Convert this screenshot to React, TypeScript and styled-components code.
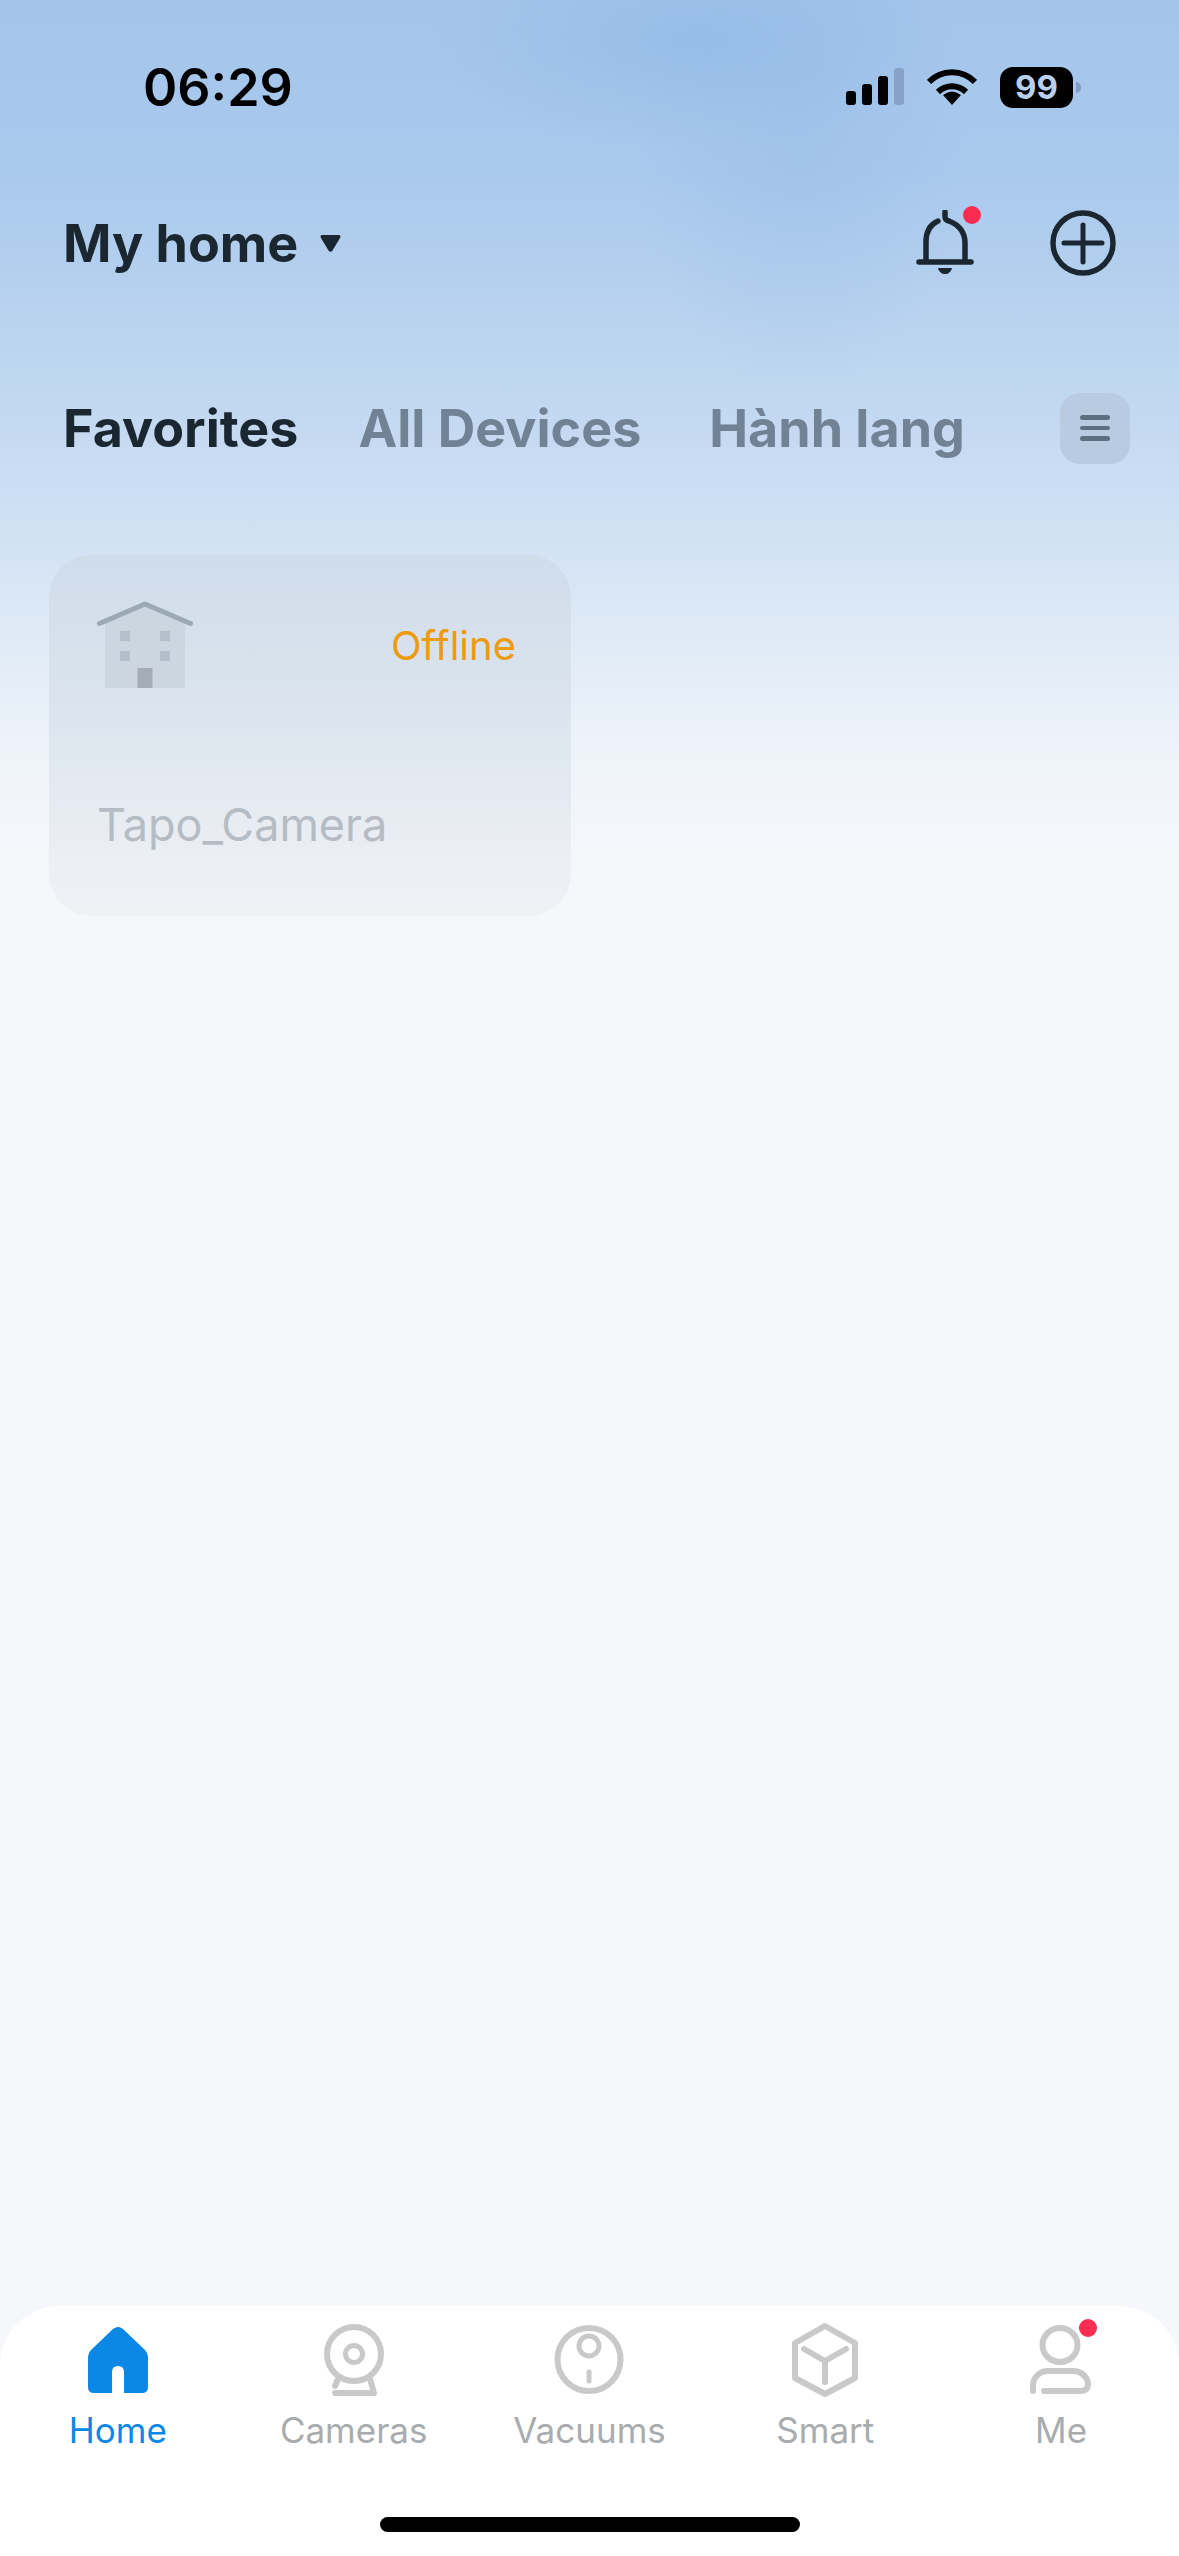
import React from "react";
import styled, { createGlobalStyle } from "styled-components";

const Global = createGlobalStyle`
  html, body { margin: 0; padding: 0; background: #f5f7fb; }
  body { font-family: Inter, "Noto Sans", sans-serif; overflow: hidden; }
`;

const Page = styled.div`
  position: relative;
  width: 1179px;
  height: 2556px;
  display: flex;
  flex-direction: column;
  overflow: hidden;
  background:
    radial-gradient(ellipse 260px 110px at 690px 40px, rgba(146, 186, 229, 0.75), transparent),
    radial-gradient(ellipse 170px 260px at 800px 130px, rgba(150, 188, 230, 0.45), transparent),
    linear-gradient(180deg, #a4c5eb 0, #a9c9ed 170px, #bad3ef 330px, #cbdef3 490px, #dde9f6 620px, #eff4fa 760px, #f5f7fb 860px, #f5f7fb 100%);
`;

const StatusBar = styled.div`
  height: 174px;
  flex: none;
  display: flex;
  align-items: center;
  justify-content: space-between;
  padding: 0 98px 0 143px;
`;

const Clock = styled.span`
  font-size: 52px;
  font-weight: 600;
  color: #000;
`;

const StatusIcons = styled.div`
  display: flex;
  align-items: center;
  gap: 23px;
`;

const Battery = styled.div`
  display: flex;
  align-items: center;
  gap: 3px;
`;

const BatteryBody = styled.div`
  width: 73px;
  height: 41px;
  border-radius: 13px;
  background: #000;
  color: #b8d0ee;
  font-size: 33px;
  font-weight: 700;
  display: flex;
  align-items: center;
  justify-content: center;
`;

const BatteryNub = styled.div`
  width: 5px;
  height: 11px;
  border-radius: 0 6px 6px 0;
  background: #7f9fc6;
`;

const Header = styled.header`
  height: 138px;
  flex: none;
  display: flex;
  align-items: center;
  justify-content: space-between;
  padding: 0 63px;
`;

const HomeSelect = styled.div`
  display: flex;
  align-items: center;
  gap: 22px;
`;

const HomeTitle = styled.h1`
  margin: 0;
  font-size: 52px;
  font-weight: 700;
  color: #1b2730;
`;

const HeaderActions = styled.div`
  display: flex;
  align-items: center;
  gap: 76px;
`;

const IconWrap = styled.div`
  position: relative;
  display: flex;
`;

const Dot = styled.span<{ $top: number; $right: number }>`
  position: absolute;
  top: ${(p) => p.$top}px;
  right: ${(p) => p.$right}px;
  width: 18px;
  height: 18px;
  border-radius: 50%;
  background: #fb2c52;
`;

const Tabs = styled.nav`
  flex: none;
  height: 72px;
  margin-top: 80px;
  display: flex;
  align-items: center;
  padding: 0 49px 0 63px;
`;

const Tab = styled.span<{ $active?: boolean }>`
  font-size: 52px;
  font-weight: 700;
  margin-right: ${(p) => (p.$active ? 60 : 68)}px;
  color: ${(p) => (p.$active ? "#1b2730" : "#718294")};
  white-space: nowrap;
`;

const MenuButton = styled.div`
  margin-left: auto;
  width: 70px;
  height: 71px;
  border-radius: 20px;
  background: #b9cbe0;
  display: flex;
  flex-direction: column;
  align-items: center;
  justify-content: center;
  gap: 6px;
`;

const MenuLine = styled.span`
  width: 30px;
  height: 4.5px;
  border-radius: 3px;
  background: #5c6f80;
`;

const Grid = styled.main`
  flex: 1;
  padding: 91px 0 0 49px;
`;

const Card = styled.article`
  width: 522px;
  height: 361px;
  box-sizing: border-box;
  border-radius: 42px;
  background: linear-gradient(180deg, #cfdcea 0%, #dce5ee 45%, #eceff4 85%, #eff1f5 100%);
  padding: 46px 55px 0 48px;
  display: flex;
  flex-direction: column;
`;

const CardTop = styled.div`
  display: flex;
  align-items: center;
  justify-content: space-between;
`;

const Offline = styled.span`
  font-size: 40px;
  color: #ee9b0b;
`;

const DeviceName = styled.div`
  margin-top: auto;
  margin-bottom: 63px;
  font-size: 45px;
  line-height: 56px;
  font-weight: 400;
  color: #b5bcc3;
`;

const BottomNav = styled.footer`
  flex: none;
  height: 250px;
  box-sizing: border-box;
  background: #fff;
  border-radius: 60px 60px 0 0;
  padding-top: 17px;
  display: flex;
  flex-direction: column;
`;

const NavGrid = styled.div`
  display: grid;
  grid-template-columns: repeat(5, 1fr);
`;

const NavItem = styled.div`
  display: flex;
  flex-direction: column;
  align-items: center;
`;

const NavIcon = styled.div`
  position: relative;
  height: 74px;
  display: flex;
  align-items: center;
  justify-content: center;
`;

const NavLabel = styled.span<{ $active?: boolean }>`
  margin-top: 13px;
  font-size: 35px;
  line-height: 40px;
  color: ${(p) => (p.$active ? "#0b87e6" : "#a9acae")};
`;

const HomeIndicator = styled.div`
  width: 420px;
  height: 15px;
  border-radius: 8px;
  background: #000;
  margin: 67px auto 0;
`;

const Signal = () => (
  <svg width="58" height="38" viewBox="846 69 58 38">
    <rect x="846" y="92" width="10" height="14" rx="3" fill="#000" />
    <rect x="862" y="85" width="10" height="21" rx="3" fill="#000" />
    <rect x="878" y="77" width="10" height="29" rx="3" fill="#000" />
    <rect x="894" y="69" width="10" height="37" rx="3" fill="#86a3c5" />
  </svg>
);

const Wifi = () => (
  <svg width="50" height="38" viewBox="927 69 50 38" fill="none" stroke="#000" strokeWidth="6">
    <path d="M929 83A32 32 0 0 1 975 83" />
    <path d="M938 93A20 20 0 0 1 966 93" />
    <path d="M952 106L943 96Q952 89 961 96Z" fill="#000" stroke="none" />
  </svg>
);

const Caret = () => (
  <svg width="21" height="17" viewBox="0 0 21 17">
    <path d="M2.5 0H18.5Q21.500 0 20 3L12.500 15.500Q10.500 18 8.500 15.500L1 3Q-.5 0 2.500 0Z" fill="#1b2730" />
  </svg>
);

const Bell = () => (
  <svg width="58" height="66" viewBox="916 211 58 66" fill="none" stroke="#1b2730" strokeWidth="5.500" strokeLinecap="round">
    <path d="M926 262V243C926 232 931 225 938 222" />
    <path d="M945 213V218Q945 221 949 222C959 226 965 233 965 244V262" />
    <path d="M919 263H971" />
    <path d="M938 269H952C950 277 940 277 938 269Z" fill="#1b2730" stroke="none" />
  </svg>
);

const Plus = () => (
  <svg width="66" height="66" viewBox="0 0 66 66" fill="none" stroke="#1b2730" strokeLinecap="round">
    <circle cx="33" cy="33" r="30" strokeWidth="5.500" />
    <path d="M14 33H52M33 15V52" strokeWidth="5" />
  </svg>
);

const House = () => (
  <svg width="96" height="88" viewBox="96 600 96 88">
    <path d="M104 622L144 602L184 622V687H104Z" fill="#cbd6e0" />
    <path d="M98.500 622.500L144 603L189.500 622.500" fill="none" stroke="#9ba8b5" strokeWidth="5" strokeLinecap="round" strokeLinejoin="round" />
    <g fill="#b3bfca">
      <rect x="119" y="630" width="10" height="10" />
      <rect x="159" y="630" width="10" height="10" />
      <rect x="119" y="650" width="10" height="10" />
      <rect x="159" y="650" width="10" height="10" />
    </g>
    <rect x="136.500" y="667" width="15" height="20" fill="#a4adb7" />
  </svg>
);

const HomeIcon = () => (
  <svg width="60" height="66" viewBox="88 2326 60 66">
    <path
      d="M113 2328Q118 2324 123 2328L145 2349Q148 2352 148 2356V2386Q148 2392 142 2392H124V2371Q124 2365 118 2365Q112 2365 112 2371V2392H94Q88 2392 88 2386V2356Q88 2352 91 2349Z"
      fill="#0b87e6"
    />
  </svg>
);

const grey = { fill: "none", stroke: "#c9c9c9", strokeWidth: 6, strokeLinecap: "round", strokeLinejoin: "round" } as const;

const CameraIcon = () => (
  <svg width="62" height="74" viewBox="322 2323 62 74" {...grey}>
    <circle cx="353" cy="2354" r="27" />
    <circle cx="353" cy="2354" r="8.500" strokeWidth="5" />
    <path d="M337 2379L334 2386" />
    <path d="M369 2379L373 2393H334" />
  </svg>
);

const VacuumIcon = () => (
  <svg width="70" height="72" viewBox="554 2324 70 72" {...grey}>
    <circle cx="589" cy="2359.500" r="31.500" />
    <circle cx="589" cy="2346" r="10" strokeWidth="5" />
    <path d="M589 2372V2381" strokeWidth="5" />
  </svg>
);

const SmartIcon = () => (
  <svg width="68" height="74" viewBox="790 2323 68 74" {...grey}>
    <path d="M824 2326L854 2343V2378L824 2394L794 2378V2343Z" />
    <path d="M803 2349L824 2361L845 2349M824 2361V2382" />
  </svg>
);

const MeIcon = () => (
  <svg width="62" height="70" viewBox="1030 2327 62 70" {...grey}>
    <ellipse cx="1060" cy="2347" rx="17.500" ry="17" />
    <path d="M1033 2393V2388C1033 2379 1040 2373 1048 2373H1073C1082 2373 1088 2380 1088 2386C1088 2391 1085 2393 1080 2393H1044" />
  </svg>
);

const navItems = [
  { label: "Home", icon: <HomeIcon />, active: true },
  { label: "Cameras", icon: <CameraIcon /> },
  { label: "Vacuums", icon: <VacuumIcon /> },
  { label: "Smart", icon: <SmartIcon /> },
  { label: "Me", icon: <MeIcon />, dot: true },
];

export default function App() {
  return (
    <Page>
      <Global />
      <StatusBar>
        <Clock>06:29</Clock>
        <StatusIcons>
          <Signal />
          <Wifi />
          <Battery>
            <BatteryBody>99</BatteryBody>
            <BatteryNub />
          </Battery>
        </StatusIcons>
      </StatusBar>
      <Header>
        <HomeSelect>
          <HomeTitle>My home</HomeTitle>
          <Caret />
        </HomeSelect>
        <HeaderActions>
          <IconWrap>
            <Bell />
            <Dot $top={-4} $right={-7} />
          </IconWrap>
          <Plus />
        </HeaderActions>
      </Header>
      <Tabs>
        <Tab $active>Favorites</Tab>
        <Tab>All Devices</Tab>
        <Tab>Hành lang</Tab>
        <MenuButton>
          <MenuLine />
          <MenuLine />
          <MenuLine />
        </MenuButton>
      </Tabs>
      <Grid>
        <Card>
          <CardTop>
            <House />
            <Offline>Offline</Offline>
          </CardTop>
          <DeviceName>Tapo_Camera</DeviceName>
        </Card>
      </Grid>
      <BottomNav>
        <NavGrid>
          {navItems.map((item) => (
            <NavItem key={item.label}>
              <NavIcon>
                {item.icon}
                {item.dot && <Dot $top={-4} $right={-5} />}
              </NavIcon>
              <NavLabel $active={item.active}>{item.label}</NavLabel>
            </NavItem>
          ))}
        </NavGrid>
        <HomeIndicator />
      </BottomNav>
    </Page>
  );
}
